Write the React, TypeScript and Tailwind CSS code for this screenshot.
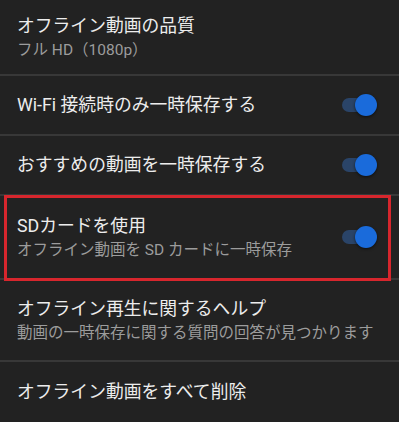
import React from 'react';

const font = { fontFamily: 'Roboto, "Noto Sans CJK JP", sans-serif' };

const Toggle: React.FC = () => (
  <div className="relative w-[35px] h-[22px] shrink-0">
    <div className="absolute left-0 top-[4px] w-[31px] h-[14px] rounded-full bg-[#2a4468]" />
    <div className="absolute right-0 top-0 w-[22px] h-[22px] rounded-full bg-[#1a6bdb] shadow-[0_1px_3px_rgba(0,0,0,0.6)]" />
  </div>
);

const Divider = () => <div className="h-[2px] bg-[#383838]" />;

interface RowProps {
  title: string;
  sub?: string;
  toggle?: boolean;
  h: string;
  children?: React.ReactNode;
}

const Row: React.FC<RowProps> = ({ title, sub, toggle, h, children }) => (
  <div className={`relative flex items-center justify-between pl-[17px] pr-[22px] ${h}`}>
    <div className="flex flex-col gap-[1px] whitespace-nowrap">
      <span className="text-[17.8px] leading-[24px] text-[#ededed]">{title}</span>
      {sub && <span className="text-[15.5px] leading-[22px] text-[#9c9c9c]">{sub}</span>}
    </div>
    {toggle && <Toggle />}
    {children}
  </div>
);

export default function App() {
  return (
    <div className="w-[399px] h-[422px] overflow-hidden bg-[#222222] flex flex-col" style={font}>
      <Row h="h-[74px]" title="オフライン動画の品質" sub="フル HD（1080p）" />
      <Divider />
      <Row h="h-[58px]" title="Wi-Fi 接続時のみ一時保存する" toggle />
      <Divider />
      <Row h="h-[58px]" title="おすすめの動画を一時保存する" toggle />
      <Divider />
      <Row h="h-[82px]" title="SDカードを使用" sub="オフライン動画を SD カードに一時保存" toggle>
        {/* 赤枠ハイライト */}
        <div className="absolute -top-[1px] left-[4px] right-[8px] h-[86px] border-[3px] border-[#d7262d] pointer-events-none" />
      </Row>
      <Divider />
      <Row h="h-[80px]" title="オフライン再生に関するヘルプ" sub="動画の一時保存に関する質問の回答が見つかります" />
      <Divider />
      <Row h="h-[60px]" title="オフライン動画をすべて削除" />
    </div>
  );
}
